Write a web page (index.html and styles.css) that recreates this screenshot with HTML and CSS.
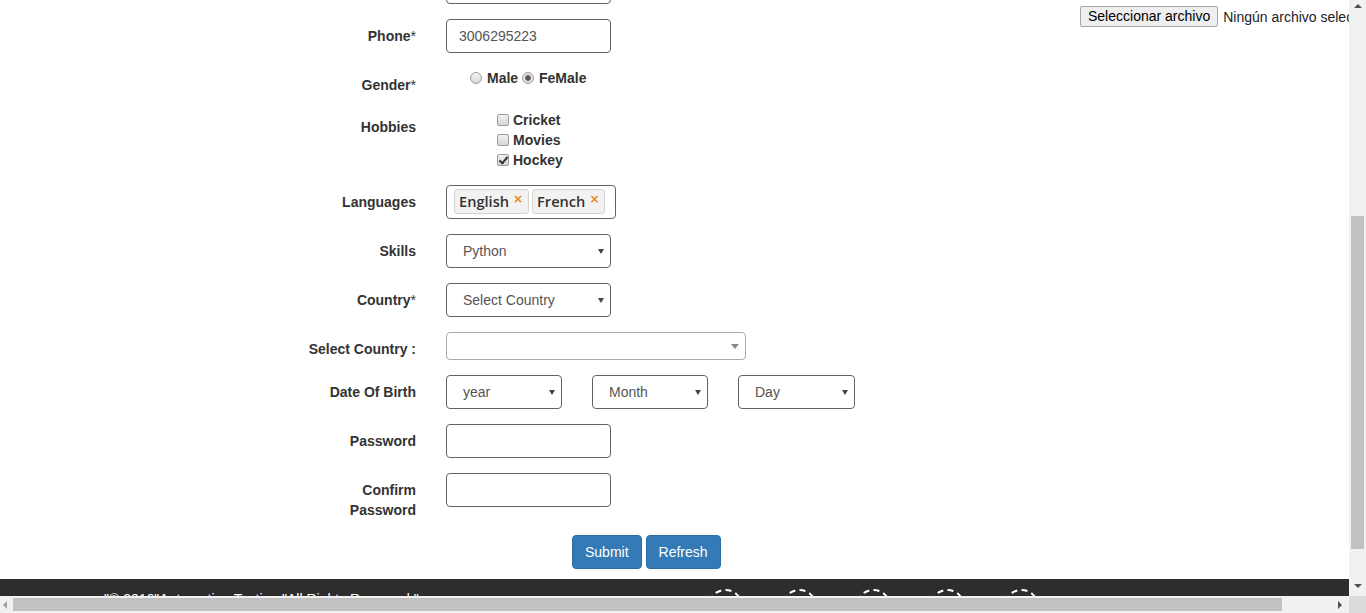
FILE: index.html
```html
<!DOCTYPE html>
<html lang="en">
<head>
<meta charset="utf-8">
<title>Register</title>
<link rel="stylesheet" href="styles.css">
</head>
<body>
<div class="window">
  <div class="viewport">
    <div class="page">
      <div class="main">
        <form class="form">
          <div class="row">
            <span class="lbl"></span>
            <div class="field"><input class="input" type="email"></div>
          </div>
          <div class="row">
            <label class="lbl">Phone<span class="req">*</span></label>
            <div class="field"><input class="input" type="tel" value="3006295223"></div>
          </div>
          <div class="row">
            <label class="lbl">Gender<span class="req">*</span></label>
            <div class="field radios">
              <label class="opt"><input class="radio" type="radio" name="g">Male</label>
              <label class="opt"><input class="radio" type="radio" name="g" checked>FeMale</label>
            </div>
          </div>
          <div class="row">
            <label class="lbl">Hobbies</label>
            <div class="field checks">
              <label class="chk"><input class="box" type="checkbox">Cricket</label>
              <label class="chk"><input class="box" type="checkbox">Movies</label>
              <label class="chk"><input class="box" type="checkbox" checked>Hockey</label>
            </div>
          </div>
          <div class="row">
            <label class="lbl">Languages</label>
            <div class="field">
              <div class="multi">
                <span class="tag">English<span class="x">×</span></span>
                <span class="tag">French<span class="x">×</span></span>
              </div>
            </div>
          </div>
          <div class="row">
            <label class="lbl">Skills</label>
            <div class="field">
              <span class="sel w165"><select class="select"><option>Python</option></select></span>
            </div>
          </div>
          <div class="row">
            <label class="lbl">Country<span class="req">*</span></label>
            <div class="field">
              <span class="sel w165"><select class="select"><option>Select Country</option></select></span>
            </div>
          </div>
          <div class="row">
            <label class="lbl">Select Country :</label>
            <div class="field">
              <div class="select2"><span class="s2arrow"></span></div>
            </div>
          </div>
          <div class="row">
            <label class="lbl">Date Of Birth</label>
            <div class="field dob">
              <span class="sel w116"><select class="select"><option>year</option></select></span>
              <span class="sel w116"><select class="select"><option>Month</option></select></span>
              <span class="sel w117"><select class="select"><option>Day</option></select></span>
            </div>
          </div>
          <div class="row">
            <label class="lbl">Password</label>
            <div class="field"><input class="input" type="password"></div>
          </div>
          <div class="row">
            <label class="lbl">Confirm Password</label>
            <div class="field"><input class="input" type="password"></div>
          </div>
          <div class="row">
            <span class="lbl"></span>
            <div class="field buttons">
              <button type="button" class="btn">Submit</button>
              <button type="button" class="btn">Refresh</button>
            </div>
          </div>
        </form>
        <div class="upload">
          <span class="filebtn">Seleccionar archivo</span>
          <span class="filetext">Ningún archivo seleccionado</span>
        </div>
      </div>
      <footer class="footer">
        <p class="copy">"© 2016"Automation Testing "All Rights Reserved."</p>
        <div class="icons">
          <span class="ico"></span>
          <span class="ico"></span>
          <span class="ico"></span>
          <span class="ico"></span>
          <span class="ico"></span>
        </div>
      </footer>
    </div>
  </div>
  <div class="vscroll">
    <span class="arr up"></span>
    <div class="vtrack"><span class="vthumb"></span></div>
    <span class="arr down"></span>
  </div>
  <div class="hscroll">
    <span class="harr left"></span>
    <span class="hthumb"></span>
    <span class="hspace"></span>
    <span class="harr right"></span>
  </div>
  <div class="corner"></div>
</div>
</body>
</html>
```
FILE: styles.css
```css
* { box-sizing: border-box; }
html, body { margin: 0; padding: 0; }
body {
  font-family: "Liberation Sans", Arial, sans-serif;
  font-size: 14px;
  color: #333;
  background: #fff;
  overflow: hidden;
}
.window {
  display: grid;
  grid-template-columns: 1349px 17px;
  grid-template-rows: 596px 17px;
  width: 1366px;
  height: 613px;
}
.viewport {
  overflow: hidden;
  background: #fff;
}
.page { width: 1400px; }
.main {
  display: flex;
  align-items: flex-start;
}
.form {
  width: 1080px;
  flex-shrink: 0;
  margin: -30px 0 0;
  padding-left: 304px;
  display: flex;
  flex-direction: column;
  gap: 15px;
}
.row {
  display: grid;
  grid-template-columns: 112px auto;
  column-gap: 30px;
  align-items: start;
}
.lbl {
  display: block;
  font-weight: bold;
  font-size: 14px;
  line-height: 20px;
  padding-top: 7px;
  text-align: right;
  color: #333;
}
.req { font-weight: normal; }
.field { min-height: 20px; }
.input {
  display: block;
  width: 165px;
  height: 34px;
  padding: 6px 12px;
  border: 1px solid #626262;
  border-radius: 4px;
  font-family: "Liberation Sans", Arial, sans-serif;
  font-size: 14px;
  color: #555;
  background: #fff;
  outline: none;
}
.radios {
  padding-left: 24px;
  line-height: 20px;
  font-weight: bold;
  color: #333;
  white-space: nowrap;
}
.radio {
  appearance: none;
  -webkit-appearance: none;
  width: 12px;
  height: 12px;
  margin: 0 5px 0 0;
  border: 1px solid #9c9c9c;
  border-radius: 50%;
  background: linear-gradient(#f6f6f6, #d6d6d6);
  vertical-align: -1px;
}
.radio:checked {
  background: radial-gradient(circle, #555 0 2.4px, #e2e2e2 3.2px);
}
.checks {
  padding-left: 51px;
  display: flex;
  flex-direction: column;
  line-height: 20px;
  font-weight: bold;
}
.chk { display: flex; align-items: center; }
.box {
  appearance: none;
  -webkit-appearance: none;
  position: relative;
  width: 12px;
  height: 12px;
  margin: 0 4px 0 0;
  border: 1px solid #9c9c9c;
  border-radius: 2px;
  background: linear-gradient(#f0f0f0, #d8d8d8);
}
.box:checked::after {
  content: "";
  position: absolute;
  left: 3px;
  top: 0px;
  width: 3px;
  height: 7px;
  border-right: 2px solid #333;
  border-bottom: 2px solid #333;
  transform: rotate(40deg);
}
.multi {
  width: 170px;
  height: 34px;
  border: 1px solid #626262;
  border-radius: 4px;
  padding: 3px 7px;
  display: flex;
  gap: 3px;
}
.tag {
  display: inline-flex;
  align-items: flex-start;
  height: 25px;
  padding: 0 5px 0 4px;
  background: #f2f2f2;
  border: 1px solid #d3d3d3;
  border-radius: 3px;
  font-family: "Open Sans", sans-serif;
  font-weight: 600;
  font-size: 14.6px;
  line-height: 23px;
  color: #333;
}
.x {
  color: #e38a14;
  font-family: "DejaVu Sans", sans-serif;
  font-weight: bold;
  font-size: 12px;
  line-height: 18px;
  margin-left: 4px;
}
.sel {
  position: relative;
  display: inline-block;
}
.sel::after {
  content: "";
  position: absolute;
  right: 7px;
  top: 15px;
  border-left: 3.5px solid transparent;
  border-right: 3.5px solid transparent;
  border-top: 5px solid #444;
}
.select {
  appearance: none;
  -webkit-appearance: none;
  display: block;
  width: 100%;
  height: 34px;
  padding: 6px 20px 6px 16px;
  border: 1px solid #626262;
  border-radius: 4px;
  background: #fff;
  font-family: "Liberation Sans", Arial, sans-serif;
  font-size: 14px;
  color: #555;
}
.w165 { width: 165px; }
.w116 { width: 116px; }
.w117 { width: 117px; }
.dob { display: flex; gap: 30px; }
.select2 {
  position: relative;
  width: 300px;
  height: 28px;
  border: 1px solid #aaa;
  border-radius: 4px;
  background: #fff;
}
.s2arrow {
  position: absolute;
  right: 6px;
  top: 11px;
  border-left: 4px solid transparent;
  border-right: 4px solid transparent;
  border-top: 5px solid #888;
}
.buttons {
  padding-left: 126px;
  display: flex;
  gap: 4px;
}
.btn {
  height: 34px;
  padding: 6px 12px;
  border: 1px solid #2e6da4;
  border-radius: 4px;
  background: #337ab7;
  color: #fff;
  font-family: "Liberation Sans", Arial, sans-serif;
  font-size: 14px;
  line-height: 20px;
}
.upload {
  padding-top: 6px;
  display: flex;
  align-items: center;
  gap: 5px;
  white-space: nowrap;
}
.filebtn {
  display: inline-block;
  height: 21px;
  padding: 0 7px;
  line-height: 19px;
  border: 1px solid #a6a6a6;
  border-radius: 2px;
  background: #efefef;
  color: #000;
  font-size: 14px;
}
.filetext { color: #222; font-size: 14px; }
.footer {
  margin-top: 10px;
  height: 60px;
  background: #2d2d2d;
  padding: 10px 0 0 104px;
  display: flex;
  align-items: flex-start;
}
.copy {
  margin: 0;
  width: 604px;
  color: #fff;
  font-size: 14px;
  line-height: 20px;
}
.icons {
  display: flex;
  gap: 39px;
}
.ico {
  width: 35px;
  height: 35px;
  border: 2px dashed #fff;
  border-radius: 50%;
}
.vscroll {
  background: #f1f1f1;
  display: flex;
  flex-direction: column;
}
.arr {
  height: 17px;
  display: flex;
  align-items: center;
  justify-content: center;
}
.arr.up::before {
  content: "";
  border-left: 4px solid transparent;
  border-right: 4px solid transparent;
  border-bottom: 4px solid #505050;
  margin-top: -6px;
}
.arr.down::before {
  content: "";
  border-left: 4px solid transparent;
  border-right: 4px solid transparent;
  border-top: 4px solid #505050;
  margin-top: -3px;
}
.vtrack { flex: 1; padding: 199px 2px 0; }
.vthumb {
  display: block;
  width: 13px;
  height: 333px;
  background: #c1c1c1;
}
.hscroll {
  background: #f1f1f1;
  display: flex;
  align-items: center;
}
.harr {
  display: flex;
  align-items: center;
  justify-content: center;
  height: 17px;
}
.harr.left { width: 13px; }
.harr.right { width: 17px; }
.harr.left::before {
  content: "";
  border-top: 4px solid transparent;
  border-bottom: 4px solid transparent;
  border-right: 4px solid #a3a3a3;
  margin-left: -4px;
}
.harr.right::before {
  content: "";
  border-top: 4px solid transparent;
  border-bottom: 4px solid transparent;
  border-left: 4px solid #505050;
  margin-left: -1px;
}
.hthumb {
  width: 1269px;
  height: 13px;
  background: #c1c1c1;
}
.hspace { flex: 1; }
.corner { background: #dcdcdc; }
```
